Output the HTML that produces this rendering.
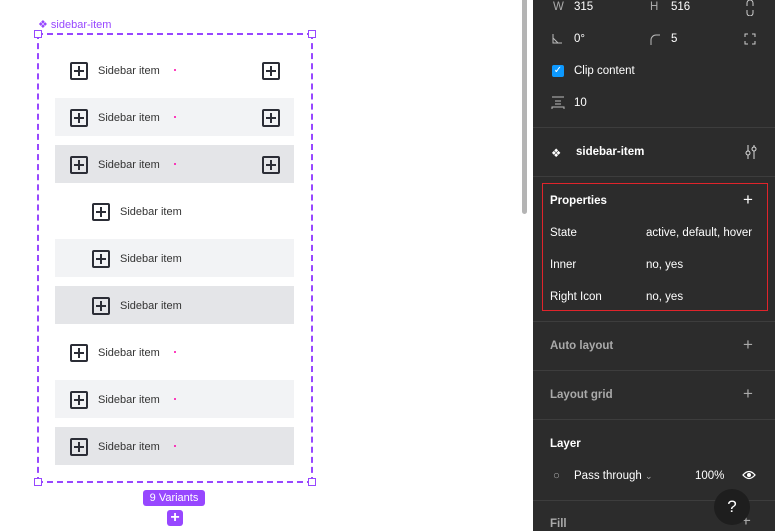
<!DOCTYPE html><html><head><style>
body{margin:0;width:775px;height:531px;overflow:hidden;background:#fff;font-family:"Liberation Sans",sans-serif;position:relative}
.a{position:absolute}
.row{position:absolute;left:55px;width:239px;height:38px}
.ic{position:absolute;top:11px;width:14px;height:14px;border:2px solid #2b2d36;border-radius:2px}
.ic:before{content:"";position:absolute;left:6px;top:2px;width:2px;height:10px;background:#2b2d36}
.ic:after{content:"";position:absolute;left:2px;top:6px;width:10px;height:2px;background:#2b2d36}
.t{position:absolute;top:14px;font-size:11px;color:#333}
.d{position:absolute;left:119px;top:18px;width:2px;height:2px;background:#f0a;border-radius:1px}
.p{position:absolute;background:#2c2c2c;left:533px;top:0;width:242px;height:531px;color:#fff;font-size:11.5px}
.p .a{white-space:nowrap}
.hr{position:absolute;left:0;width:242px;height:1px;background:#3d3d3d}
.g{color:#aaa}
</style></head><body>
<div class="a" style="left:38px;top:18px;color:#9747ff;font-size:11px">❖ sidebar-item</div>
<div class="a" style="left:37px;top:33px;width:272px;height:446px;border:2px dashed #9747ff"></div>
<div class="a" style="left:34px;top:30px;width:6px;height:6px;border:1px solid #9747ff;background:#fff"></div>
<div class="a" style="left:308px;top:30px;width:6px;height:6px;border:1px solid #9747ff;background:#fff"></div>
<div class="a" style="left:34px;top:478px;width:6px;height:6px;border:1px solid #9747ff;background:#fff"></div>
<div class="a" style="left:308px;top:478px;width:6px;height:6px;border:1px solid #9747ff;background:#fff"></div>

<div class="row" style="top:51px"><div class="ic" style="left:15px"></div><div class="t" style="left:43px">Sidebar item</div><div class="d"></div><div class="ic" style="left:207px"></div></div>
<div class="row" style="top:98px;background:#f2f3f5"><div class="ic" style="left:15px"></div><div class="t" style="left:43px">Sidebar item</div><div class="d"></div><div class="ic" style="left:207px"></div></div>
<div class="row" style="top:145px;background:#e4e5e8"><div class="ic" style="left:15px"></div><div class="t" style="left:43px">Sidebar item</div><div class="d"></div><div class="ic" style="left:207px"></div></div>
<div class="row" style="top:192px"><div class="ic" style="left:37px"></div><div class="t" style="left:65px">Sidebar item</div></div>
<div class="row" style="top:239px;background:#f2f3f5"><div class="ic" style="left:37px"></div><div class="t" style="left:65px">Sidebar item</div></div>
<div class="row" style="top:286px;background:#e4e5e8"><div class="ic" style="left:37px"></div><div class="t" style="left:65px">Sidebar item</div></div>
<div class="row" style="top:333px"><div class="ic" style="left:15px"></div><div class="t" style="left:43px">Sidebar item</div><div class="d"></div></div>
<div class="row" style="top:380px;background:#f2f3f5"><div class="ic" style="left:15px"></div><div class="t" style="left:43px">Sidebar item</div><div class="d"></div></div>
<div class="row" style="top:427px;background:#e4e5e8"><div class="ic" style="left:15px"></div><div class="t" style="left:43px">Sidebar item</div><div class="d"></div></div>

<div class="a" style="left:143px;top:490px;width:62px;height:16px;background:#9747ff;border-radius:3px;color:#fff;font-size:11px;text-align:center;line-height:16px">9 Variants</div>
<div class="a" style="left:167px;top:510px;width:16px;height:16px;background:#9747ff;border-radius:3px;color:#fff;font-size:16px;text-align:center;line-height:16px;font-weight:bold">+</div>
<div class="a" style="left:522px;top:0;width:5px;height:214px;background:#b4b4b4;border-radius:0 0 3px 3px"></div>

<div class="p">
<div class="a g" style="left:20px;top:1px">W</div><div class="a" style="left:41px;top:1px">315</div>
<div class="a g" style="left:117px;top:1px">H</div><div class="a" style="left:138px;top:1px">516</div>
<svg class="a" style="left:211px;top:0" width="12" height="16"><path d="M3 6V3a3 3 0 0 1 6 0v3M3 10v3a3 3 0 0 0 6 0v-3" stroke="#ccc" fill="none"/></svg>
<svg class="a" style="left:18px;top:33px" width="12" height="12"><path d="M2 1v9h9M2 5l5 5" stroke="#bbb" fill="none"/></svg>
<div class="a" style="left:41px;top:33px">0°</div>
<svg class="a" style="left:116px;top:33px" width="12" height="12"><path d="M2 12V7a5 5 0 0 1 5-5h4" stroke="#bbb" fill="none"/></svg>
<div class="a" style="left:138px;top:33px">5</div>
<svg class="a" style="left:211px;top:33px" width="12" height="12"><path d="M1 4V1h3M8 1h3v3M11 8v3H8M4 11H1V8" stroke="#ccc" fill="none"/></svg>
<div class="a" style="left:19px;top:65px;width:12px;height:12px;background:#0d99ff;border-radius:2px;font-size:10px;text-align:center;line-height:12px">✓</div>
<div class="a" style="left:41px;top:65px">Clip content</div>
<svg class="a" style="left:18px;top:96px" width="14" height="14"><path d="M1 1h12M1 13V11h12v2M4 5h6M4 8h6" stroke="#bbb" fill="none"/></svg>
<div class="a" style="left:41px;top:97px">10</div>
<div class="hr" style="top:127px"></div>
<div class="a" style="left:18px;top:146px">❖</div><div class="a" style="left:43px;top:146px;font-weight:bold">sidebar-item</div>
<svg class="a" style="left:211px;top:144px" width="14" height="16"><g stroke="#ddd" fill="none"><path d="M4 1v6M4 11v4M10 1v2M10 7v8"/><circle cx="4" cy="9" r="2"/><circle cx="10" cy="5" r="2"/></g></svg>
<div class="hr" style="top:176px"></div>
<div class="a" style="left:9px;top:183px;width:224px;height:126px;border:1px solid #e0242b"></div>
<div class="a" style="left:17px;top:195px;font-weight:bold">Properties</div><div class="a" style="left:210px;top:190px;font-size:17px">+</div>
<div class="a" style="left:17px;top:227px">State</div><div class="a" style="left:113px;top:227px">active, default, hover</div>
<div class="a" style="left:17px;top:259px">Inner</div><div class="a" style="left:113px;top:259px">no, yes</div>
<div class="a" style="left:17px;top:291px">Right Icon</div><div class="a" style="left:113px;top:291px">no, yes</div>
<div class="hr" style="top:321px"></div>
<div class="a g" style="left:17px;top:340px;font-weight:bold">Auto layout</div><div class="a g" style="left:210px;top:335px;font-size:17px">+</div>
<div class="hr" style="top:370px"></div>
<div class="a g" style="left:17px;top:389px;font-weight:bold">Layout grid</div><div class="a g" style="left:210px;top:384px;font-size:17px">+</div>
<div class="hr" style="top:419px"></div>
<div class="a" style="left:17px;top:438px;font-weight:bold">Layer</div>
<div class="a g" style="left:20px;top:470px">○</div><div class="a" style="left:41px;top:470px">Pass through <span class="g" style="font-size:9px">⌄</span></div>
<div class="a" style="left:162px;top:470px">100%</div>
<svg class="a" style="left:209px;top:470px" width="14" height="10"><path d="M1 5Q7-2 13 5Q7 12 1 5Z" stroke="#fff" fill="none" stroke-width="1.3"/><circle cx="7" cy="5" r="2" fill="#fff"/></svg>
<div class="hr" style="top:500px"></div>
<div class="a g" style="left:17px;top:518px;font-weight:bold">Fill</div><div class="a g" style="left:208px;top:511px;font-size:17px">+</div>
<div class="a" style="left:181px;top:489px;width:36px;height:36px;border-radius:18px;background:#1e1e1e;text-align:center;line-height:36px;font-size:17px">?</div>
</div>
</body></html>
